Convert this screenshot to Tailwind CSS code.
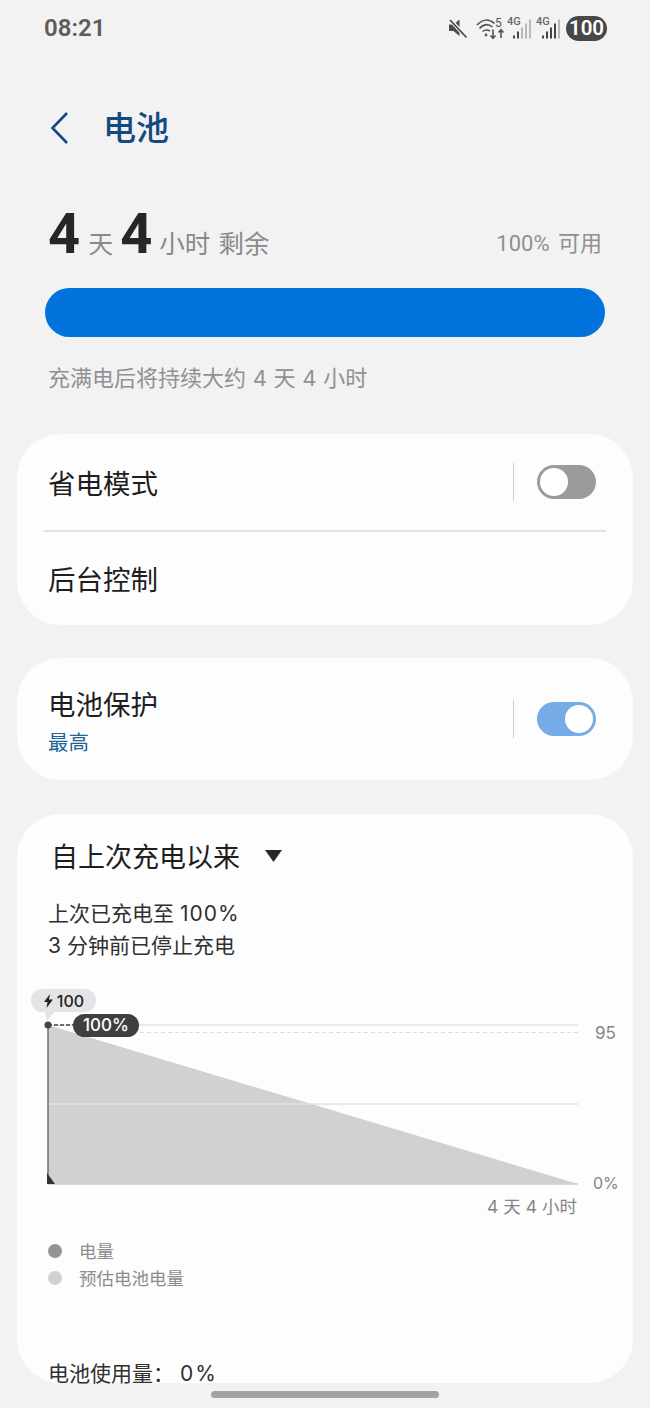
<!DOCTYPE html>
<html lang="zh-CN">
<head>
  <meta charset="UTF-8" />
  <meta name="viewport" content="width=device-width, initial-scale=1" />
  <title>电池</title>
  <script src="https://cdn.jsdelivr.net/npm/@tailwindcss/browser@4"></script>
</head>
<body class="bg-[#f2f2f2] font-['Inter','Noto_Sans_CJK_SC',sans-serif]">
  <div class="relative w-[650px] h-[1408px] overflow-hidden">

    <!-- Status bar -->
    <div class="h-[56px] pl-[44px] pr-[43px] flex items-center justify-between">
      <span class="text-[24px] font-semibold text-[#5c5c5c] font-['Roboto',sans-serif]">08:21</span>
      <div class="flex items-center">
        <svg class="w-[20px] h-[22px]" viewBox="0 0 20 22">
          <path d="M1 7.500h4.500L11.500 2.500V19l-6-5H1z" fill="#4a4a4a"/>
          <path d="M2 2.500L18.500 20.500" stroke="#f2f2f2" stroke-width="4"/>
          <path d="M2 3L18.500 20.500" stroke="#4a4a4a" stroke-width="1.800"/>
        </svg>
        <svg class="w-[30px] h-[26px] ml-[8px]" viewBox="0 0 30 26" fill="none" stroke="#555">
          <path d="M1 10C6.500 4 13 3.500 18.500 8.500" stroke-width="1.500"/>
          <path d="M3.500 13.500C7.500 9 12 8.500 16.500 12" stroke-width="1.500"/>
          <path d="M6.500 16.500C9 14.500 11.500 14.500 14 16" stroke-width="1.500"/>
          <circle cx="10" cy="20" r="1.400" fill="#555" stroke="none"/>
          <path d="M17 14.500V23M14.500 20.500l2.500 2.700 2.500-2.700M25 23V15M22.500 17.500l2.500-2.700 2.500 2.700" stroke-width="1.600"/>
          <text x="19" y="11.500" font-size="12" fill="#555" stroke="none" font-family="Roboto">5</text>
        </svg>
        <svg class="w-[25px] h-[24px] ml-[1px]" viewBox="0 0 25 24">
          <text x="0" y="9" font-size="11" font-weight="500" fill="#666" font-family="Roboto">4G</text>
          <rect x="6" y="19.500" width="2" height="3" fill="#444"/>
          <rect x="10" y="15.500" width="2" height="7" fill="#444"/>
          <rect x="14" y="11.500" width="2" height="11" fill="#b8b8b8"/>
          <rect x="18" y="7.500" width="2" height="15" fill="#b8b8b8"/>
          <rect x="22" y="3.500" width="2" height="19" fill="#b8b8b8"/>
        </svg>
        <svg class="w-[25px] h-[24px] ml-[4px]" viewBox="0 0 25 24">
          <text x="0" y="9" font-size="11" font-weight="500" fill="#666" font-family="Roboto">4G</text>
          <rect x="6" y="19.500" width="2" height="3" fill="#444"/>
          <rect x="10" y="15.500" width="2" height="7" fill="#444"/>
          <rect x="14" y="11.500" width="2" height="11" fill="#444"/>
          <rect x="18" y="7.500" width="2" height="15" fill="#444"/>
          <rect x="22" y="3.500" width="2" height="19" fill="#b8b8b8"/>
        </svg>
        <span class="ml-[5px] w-[41px] h-[25px] rounded-full bg-[#474747] text-white text-[20.500px] font-semibold flex items-center justify-center font-['Roboto',sans-serif]">100</span>
      </div>
    </div>

    <!-- Header -->
    <div class="mt-[50px] h-[44px] pl-[50px] flex items-center">
      <svg class="w-[20px] h-[34px]" viewBox="0 0 20 34" fill="none" stroke="#134a80" stroke-width="2.600">
        <path d="M17 2L2.500 17L17 32"/>
      </svg>
      <h1 class="ml-[33px] text-[33px] font-medium text-[#134a80] leading-none">电池</h1>
    </div>

    <!-- Remaining -->
    <div class="mt-[55px] h-[60px] pl-[48px] pr-[48px] flex items-center justify-between">
      <div class="flex items-baseline text-[#8a8a8a] font-['Roboto','Noto_Sans_CJK_SC',sans-serif]">
        <span class="text-[56px] font-bold text-[#262626] leading-none">4</span>
        <span class="ml-[8px] text-[25px]">天</span>
        <span class="ml-[7px] text-[56px] font-bold text-[#262626] leading-none">4</span>
        <span class="ml-[7px] text-[25.500px] [word-spacing:2px]">小时 剩余</span>
      </div>
      <span class="text-[22px] text-[#909090] mt-[16px] font-['Roboto','Noto_Sans_CJK_SC',sans-serif] [word-spacing:3px]">100% 可用</span>
    </div>

    <div class="mt-[23px] mx-[45px] h-[49px] rounded-full bg-[#0073dd]"></div>

    <p class="mt-[26px] pl-[48px] text-[22px] leading-[30px] text-[#919191] [word-spacing:0.500px]">充满电后将持续大约 4 天 4 小时</p>

    <!-- Power saving / background -->
    <section class="mt-[41px] mx-[17px] h-[191px] rounded-[44px] bg-[#fdfdfd] flex flex-col">
      <div class="h-[96px] pl-[31px] pr-[37px] flex items-center justify-between">
        <span class="mt-[5px] text-[27.500px] text-[#1e1e1e]">省电模式</span>
        <div class="flex items-center">
          <span class="w-px h-[38px] bg-[#cfcfcf]"></span>
          <span class="ml-[23px] w-[59px] h-[34px] rounded-full bg-[#9b9b9d] flex items-center pl-[3px]">
            <span class="w-[28px] h-[28px] rounded-full bg-white"></span>
          </span>
        </div>
      </div>
      <div class="mx-[27px] h-[1.500px] bg-[#e2e2e2]"></div>
      <div class="flex-1 pl-[31px] flex items-center">
        <span class="mt-[4px] text-[27.500px] text-[#1e1e1e]">后台控制</span>
      </div>
    </section>

    <!-- Battery protection -->
    <section class="mt-[33px] mx-[17px] h-[122px] rounded-[44px] bg-[#fdfdfd] pl-[31px] pr-[37px] flex items-center justify-between">
      <div class="mt-[6px] flex flex-col">
        <span class="text-[27.500px] leading-[38px] text-[#1e1e1e]">电池保护</span>
        <span class="mt-[4px] text-[20.500px] leading-[30px] text-[#1f6598]">最高</span>
      </div>
      <div class="flex items-center">
        <span class="w-px h-[38px] bg-[#cfcfcf]"></span>
        <span class="ml-[23px] w-[59px] h-[34px] rounded-full bg-[#75ace8] flex items-center justify-end pr-[3px]">
          <span class="w-[28px] h-[28px] rounded-full bg-white"></span>
        </span>
      </div>
    </section>

    <!-- Usage -->
    <section class="mt-[34px] mx-[17px] h-[569px] rounded-[44px] bg-[#fdfdfd] pt-[24px]">
      <div class="pl-[34px] flex items-center h-[40px]">
        <span class="text-[27px] text-[#1e1e1e]">自上次充电以来</span>
        <svg class="ml-[25px] w-[17px] h-[12px] -mt-[4px]" viewBox="0 0 17 12"><path d="M0 0h17L8.500 12z" fill="#262626"/></svg>
      </div>
      <div class="mt-[20px] pl-[31px] text-[21px] leading-[32px] text-[#303030]">
        <p>上次已充电至 <span class="tracking-[1px]">100%</span></p>
        <p>3 分钟前已停止充电</p>
      </div>

      <!-- Chart -->
      <div class="relative mt-[25px] h-[222px]">
        <svg class="absolute left-0 top-0 w-[616px] h-[222px]" viewBox="0 0 616 222" fill="none">
          <path d="M31 38V197H561z" fill="#d1d1d1"/>
          <path d="M31 38H561" stroke="#e4e4e4" stroke-width="1.500"/>
          <path d="M31 117H561" stroke="#e2e2e2" stroke-width="1.500"/>
          <path d="M31 197H561" stroke="#cfcfcf" stroke-width="1.500"/>
          <path d="M60 45.500H561" stroke="#dcdcdc" stroke-width="1.200" stroke-dasharray="4 3"/>
          <path d="M31 38V197" stroke="#6e6e6e" stroke-width="1.500"/>
          <path d="M30 186L38 197H30z" fill="#333"/>
          <path d="M31 38H60" stroke="#444" stroke-width="1.500" stroke-dasharray="4 2"/>
          <circle cx="31" cy="38" r="3.500" fill="#444"/>
          <path d="M27 22L30 34L40 22z" fill="#e4e4e6"/>
        </svg>
        <div class="absolute left-[14px] top-[2px] w-[65px] h-[23px] pl-[1px] rounded-full bg-[#e4e4e6] flex items-center justify-center text-[16px] font-medium text-[#222]">
          <svg class="w-[9px] h-[14px] mr-[4px]" viewBox="0 0 9 14"><path d="M6 0L0 8h3.500L2.500 14 9 5.500H5z" fill="#222"/></svg>100
        </div>
        <div class="absolute left-[56px] top-[27px] w-[66px] h-[23px] rounded-full bg-[#3f3f41] flex items-center justify-center text-[17px] font-medium text-white">100%</div>
        <span class="absolute left-[578px] top-[34px] text-[17px] leading-[24px] text-[#858585]">95</span>
        <span class="absolute left-[576px] top-[184px] text-[16px] leading-[24px] text-[#858585]">0%</span>
        <span class="absolute right-[56px] top-[208px] text-[17.500px] leading-[24px] text-[#858585]">4 天 4 小时</span>
      </div>

      <!-- Legend -->
      <div class="mt-[28px] pl-[31px] text-[17.500px] text-[#8c8c8c]">
        <div class="flex items-center h-[27px]">
          <span class="w-[14px] h-[14px] rounded-full bg-[#949494]"></span>
          <span class="mt-[4px] ml-[17px]">电量</span>
        </div>
        <div class="flex items-center h-[27px]">
          <span class="w-[14px] h-[14px] rounded-full bg-[#d1d1d1]"></span>
          <span class="mt-[4px] ml-[17px]">预估电池电量</span>
        </div>
      </div>

      <p class="mt-[68px] pl-[31px] text-[21px] leading-[30px] text-[#303030]">电池使用量： <span class="tracking-[2px]">0%</span></p>
    </section>

    <!-- Home indicator -->
    <div class="absolute left-[211px] top-[1391px] w-[228px] h-[7px] rounded-full bg-[#a3a3a3]"></div>
  </div>
</body>
</html>
